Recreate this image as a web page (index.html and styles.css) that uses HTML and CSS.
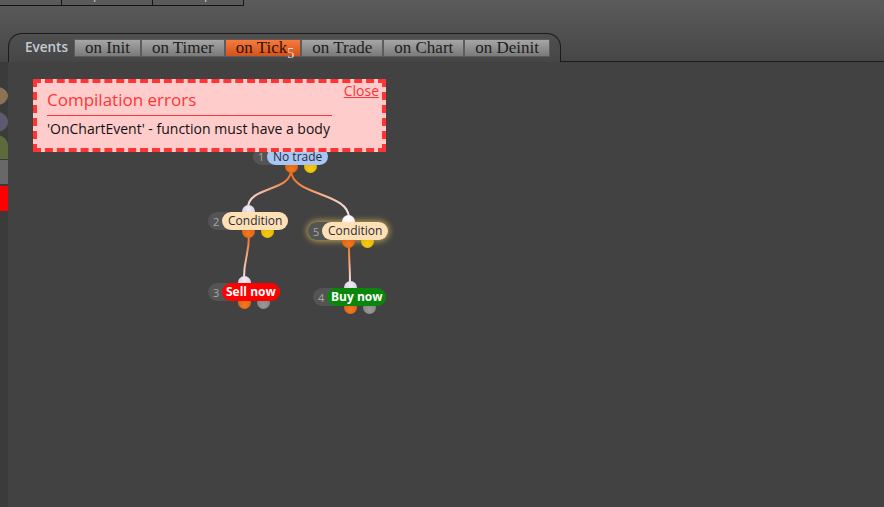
FILE: index.html
```html
<!DOCTYPE html>
<html>
<head>
    <title>Strategy Editor</title>
    <link rel="stylesheet" href="styles.css">
</head>
<body>
    <header class="top">
        <nav class="menu">
            <span>Tools</span>
            <span>Options</span>
            <span>Help</span>
        </nav>
        <div class="tabrow">
            <div class="events-panel">
                <span class="events-title">Events</span>
                <div class="tabs">
                    <span class="tab">on Init</span>
                    <span class="tab">on Timer</span>
                    <span class="tab active">on Tick<sub class="count">5</sub></span>
                    <span class="tab">on Trade</span>
                    <span class="tab">on Chart</span>
                    <span class="tab">on Deinit</span>
                </div>
            </div>
            <div class="tabrow-fill"></div>
        </div>
    </header>
    <div class="workspace">
        <div class="side">
            <div class="chip brown"></div>
            <div class="chip slate"></div>
            <div class="chip olive"></div>
            <div class="chip grey"></div>
            <div class="chip red"></div>
        </div>
        <div class="canvas">
            <svg class="edges" width="876" height="445">
                <defs>
                    <linearGradient id="ga" gradientUnits="userSpaceOnUse" x1="283" y1="108" x2="240" y2="146">
                        <stop offset="0" stop-color="#f26a18"/>
                        <stop offset="1" stop-color="#f4e6ea"/>
                    </linearGradient>
                    <linearGradient id="gb" gradientUnits="userSpaceOnUse" x1="283" y1="108" x2="341" y2="156">
                        <stop offset="0" stop-color="#f26a18"/>
                        <stop offset="1" stop-color="#f8eef0"/>
                    </linearGradient>
                    <linearGradient id="gc" gradientUnits="userSpaceOnUse" x1="241" y1="172" x2="236" y2="216">
                        <stop offset="0" stop-color="#f26a18"/>
                        <stop offset="1" stop-color="#f4e6ea"/>
                    </linearGradient>
                    <linearGradient id="gd" gradientUnits="userSpaceOnUse" x1="341" y1="182" x2="342" y2="221">
                        <stop offset="0" stop-color="#f26a18"/>
                        <stop offset="1" stop-color="#f4e6ea"/>
                    </linearGradient>
                </defs>
                <path d="M283 108 C283 130, 240 124, 240 146" stroke="url(#ga)"/>
                <path d="M283 108 C283 134, 341 130, 341 156" stroke="url(#gb)"/>
                <path d="M241 172 C241 195, 236 195, 236 216" stroke="url(#gc)"/>
                <path d="M341 182 C341 202, 342 202, 342 221" stroke="url(#gd)"/>
            </svg>

            <div class="node n1">
                <i class="port in"></i><i class="port out"></i><i class="port out2 yellow"></i>
                <span class="num">1</span><span class="label notrade">No trade</span>
            </div>
            <div class="node n2">
                <i class="port in"></i><i class="port out"></i><i class="port out2 yellow"></i>
                <span class="num">2</span><span class="label cond">Condition</span>
            </div>
            <div class="node n5 selected">
                <i class="port in bright"></i><i class="port out"></i><i class="port out2 yellow"></i>
                <span class="num">5</span><span class="label cond">Condition</span>
            </div>
            <div class="node n3">
                <i class="port in"></i><i class="port out"></i><i class="port out2 grey"></i>
                <span class="num">3</span><span class="label sell">Sell now</span>
            </div>
            <div class="node n4">
                <i class="port in"></i><i class="port out"></i><i class="port out2 grey"></i>
                <span class="num">4</span><span class="label buy">Buy now</span>
            </div>

            <div class="error-box">
                <a class="close" href="#">Close</a>
                <div class="error-title">Compilation errors</div>
                <div class="error-msg">'OnChartEvent' - function must have a body</div>
            </div>
        </div>
    </div>
</body>
</html>
```

FILE: styles.css
```css
html, body {
    height: 100%;
}
body {
    margin: 0;
    background: #424242;
    overflow: hidden;
    font-family: "Open Sans", "Liberation Sans", sans-serif;
}
.top {
    height: 62px;
    background: linear-gradient(#5b5b5b, #464646);
    overflow: hidden;
}
.menu {
    display: flex;
    margin-left: -29px;
    margin-top: -14px;
    height: 20px;
}
.menu span {
    width: 90px;
    height: 19px;
    border-right: 1px solid #151515;
    border-bottom: 1px solid #151515;
    background: #5a5a5a;
    color: #c8c8c8;
    font-size: 13px;
    line-height: 16px;
    text-align: center;
}
.tabrow {
    display: flex;
    margin-top: 27px;
    height: 29px;
}
.events-panel {
    display: flex;
    align-items: flex-start;
    gap: 6px;
    margin-left: 8px;
    width: 553px;
    box-sizing: border-box;
    padding: 5px 0 0 16px;
    border: 1px solid #1b1b1b;
    border-bottom: none;
    border-radius: 14px 14px 0 0;
}
.events-title {
    color: #c4ccd4;
    font-size: 13.5px;
    font-weight: 600;
    line-height: 17px;
}
.tabs {
    display: flex;
}
.tab {
    height: 16px;
    padding: 0 10px;
    border: 1px solid #5c5c5c;
    background: linear-gradient(#a6a6a6, #7a7a7a);
    color: #1c1c1c;
    font-family: "Liberation Serif", "DejaVu Serif", serif;
    font-size: 17px;
    line-height: 16px;
    white-space: nowrap;
}
.tab.active {
    padding-right: 6px;
    background: linear-gradient(#f57b3c, #d4521c);
    color: #2b1408;
}
.count {
    font-size: 14px;
    color: #f6dccb;
    vertical-align: -5px;
    line-height: 0;
}
.tabrow-fill {
    flex: 1;
    border-bottom: 1px solid #1b1b1b;
}

.workspace {
    display: flex;
    height: calc(100% - 62px);
}
.side {
    width: 8px;
    background: #3b3b3b;
    overflow: hidden;
}
.chip {
    width: 22px;
    margin-left: -14px;
}
.brown {
    margin-top: 25px;
    height: 18px;
    border-radius: 50%;
    background: #8c7355;
}
.slate {
    margin-top: 7px;
    height: 20px;
    border-radius: 50%;
    background: #5b5b6d;
}
.olive {
    margin-top: 3px;
    height: 24px;
    border-radius: 11px 11px 0 0;
    background: #5c6a3c;
}
.grey {
    margin-top: 1px;
    height: 24px;
    background: #686868;
}
.red {
    margin-top: 2px;
    height: 25px;
    background: #ff0000;
}

.canvas {
    flex: 1;
    position: relative;
}
.edges {
    position: absolute;
    left: 0;
    top: 0;
}
.edges path {
    fill: none;
    stroke-width: 2;
}

.node {
    position: absolute;
    display: flex;
    align-items: center;
    height: 18px;
    background: #545454;
    border-radius: 9px;
}
.n1 { left: 245px; top: 86px; height: 17px; }
.n2 { left: 200px; top: 150px; }
.n5 { left: 300px; top: 160px; }
.n3 { left: 200px; top: 221px; }
.n4 { left: 305px; top: 226px; }
.node.selected {
    box-shadow: 0 0 6px 1px rgba(240, 200, 90, 0.75);
}
.num {
    position: relative;
    width: 9px;
    padding-left: 5px;
    color: #a8a8a8;
    font-size: 11px;
}
.label {
    position: relative;
    height: 100%;
    padding: 0 6px;
    border-radius: 9px;
    color: #2a2a3a;
    font-size: 12px;
    line-height: 18px;
    white-space: nowrap;
}
.n1 .label { line-height: 17px; }
.notrade { background: #a9c7f4; }
.cond { background: #fde0b4; }
.sell, .buy {
    padding: 0 4px;
    color: #fff;
    font-weight: 700;
    font-size: 12px;
}
.sell { background: #ff0000; }
.buy { background: #0a860a; }

.port {
    position: absolute;
    width: 13px;
    height: 13px;
    border-radius: 50%;
}
.port.in {
    top: -7px;
    left: calc(50% - 6px);
    background: radial-gradient(circle at 50% 30%, #f2eef4, #c8bcd4);
}
.port.in.bright {
    background: radial-gradient(circle at 50% 30%, #ffffff, #f4dde0);
}
.port.out {
    bottom: -8px;
    left: calc(50% - 6px);
    background: radial-gradient(circle at 50% 70%, #f07a20, #d65508);
}
.port.out2 {
    bottom: -8px;
    left: calc(50% + 13px);
}
.port.yellow {
    background: radial-gradient(circle at 50% 70%, #f6cc10, #d8a800);
}
.port.grey {
    background: radial-gradient(circle at 50% 70%, #9a9a9a, #7a7a7a);
}

.error-box {
    position: absolute;
    left: 25px;
    top: 17px;
    width: 353px;
    height: 73px;
    box-sizing: border-box;
    padding: 6px 10px;
    background: #ffcccc;
    border: 4px dashed #ff3535;
}
.error-title {
    width: 285px;
    padding-bottom: 4px;
    border-bottom: 1px solid #ff3535;
    color: #ff3535;
    font-size: 17px;
    line-height: 22px;
}
.error-msg {
    margin-top: 4px;
    color: #111;
    font-size: 14px;
    line-height: 18px;
}
.close {
    position: absolute;
    top: -1px;
    right: 3px;
    color: #ff3535;
    font-size: 14px;
    line-height: 18px;
}
```
